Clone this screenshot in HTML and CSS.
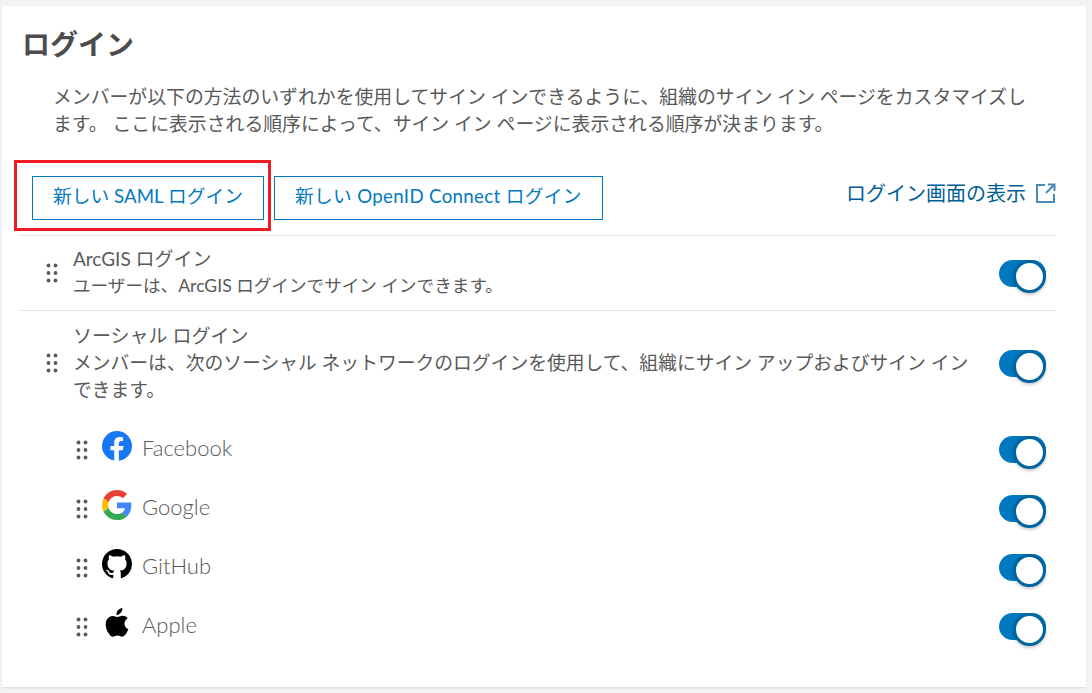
FILE: index.html
```html
<!DOCTYPE html>
<html lang="ja">
<head>
    <meta charset="UTF-8">
    <title>ログイン</title>
    <link rel="stylesheet" href="styles.css">
</head>
<body>
    <svg class="defs" width="0" height="0">
        <symbol id="grip" viewBox="0 0 12 20">
            <circle cx="2.5" cy="2.5" r="1.900"/><circle cx="9.5" cy="2.5" r="1.900"/>
            <circle cx="2.5" cy="10" r="1.900"/><circle cx="9.5" cy="10" r="1.900"/>
            <circle cx="2.5" cy="17.5" r="1.900"/><circle cx="9.5" cy="17.5" r="1.900"/>
        </symbol>
    </svg>
    <div class="card">
        <h2 class="title">ログイン</h2>
        <p class="intro">メンバーが以下の方法のいずれかを使用してサイン インできるように、組織のサイン イン ページをカスタマイズします。 ここに表示される順序によって、サイン イン ページに表示される順序が決まります。</p>
        <div class="actions">
            <a class="btn btn-saml">新しい SAML ログイン</a>
            <a class="btn btn-openid">新しい OpenID Connect ログイン</a>
            <a class="view-link">ログイン画面の表示
                <svg class="ext-icon" viewBox="0 0 20 20" fill="none" stroke="#4a8ab8" stroke-width="2">
                    <path d="M9 2H1v17h17v-8"/>
                    <path d="M12 1.500h6.500V8M18.500 1.500L10 10"/>
                </svg>
            </a>
            <div class="highlight"></div>
        </div>
        <div class="row row-arcgis">
            <svg class="grip"><use href="#grip"/></svg>
            <div class="row-text">
                <div class="row-title">ArcGIS ログイン</div>
                <div class="row-desc">ユーザーは、ArcGIS ログインでサイン インできます。</div>
            </div>
            <div class="toggle"></div>
        </div>
        <div class="row row-social">
            <svg class="grip"><use href="#grip"/></svg>
            <div class="row-text">
                <div class="row-title">ソーシャル ログイン</div>
                <div class="row-desc">メンバーは、次のソーシャル ネットワークのログインを使用して、組織にサイン アップおよびサイン インできます。</div>
            </div>
            <div class="toggle"></div>
        </div>
        <div class="providers">
            <div class="provider">
                <svg class="grip"><use href="#grip"/></svg>
                <svg class="logo" viewBox="0 0 30 30">
                    <circle cx="15" cy="15" r="15" fill="#1877f2"/>
                    <path fill="#fff" d="M20.8 19.3l.7-4.3h-4.700v-2.800c0-1.200.6-2.300 2.400-2.300h1.900V6.200s-1.700-.3-3.300-.3c-3.400 0-5.600 2.100-5.600 5.800V15H8.400v4.300h3.800v10.500c.8.1 1.500.2 2.300.2s1.600-.1 2.300-.2V19.300z"/>
                </svg>
                <span class="provider-name">Facebook</span>
                <div class="toggle"></div>
            </div>
            <div class="provider">
                <svg class="grip"><use href="#grip"/></svg>
                <svg class="logo" viewBox="0 0 48 48">
                    <path fill="#ea4335" d="M24 9.500c3.500 0 6.700 1.200 9.200 3.600l6.900-6.900C35.900 2.400 30.500 0 24 0 14.600 0 6.500 5.400 2.600 13.200l8 6.200C12.400 13.700 17.700 9.500 24 9.500z"/>
                    <path fill="#4285f4" d="M47 24.500c0-1.600-.1-3.100-.4-4.500H24v9h12.900c-.6 3-2.300 5.500-4.800 7.200l7.700 6C44.300 38 47 31.800 47 24.500z"/>
                    <path fill="#fbbc05" d="M10.600 28.600c-.5-1.400-.8-3-.8-4.600s.3-3.200.8-4.600l-8-6.200C.9 16.500 0 20.100 0 24s.9 7.500 2.600 10.800z"/>
                    <path fill="#34a853" d="M24 48c6.500 0 11.900-2.100 15.900-5.800l-7.700-6c-2.200 1.400-4.900 2.300-8.200 2.300-6.300 0-11.600-4.200-13.400-9.900l-8 6.200C6.500 42.600 14.600 48 24 48z"/>
                </svg>
                <span class="provider-name">Google</span>
                <div class="toggle"></div>
            </div>
            <div class="provider">
                <svg class="grip"><use href="#grip"/></svg>
                <svg class="logo" viewBox="0 0 16 16">
                    <path fill="#000" d="M8 0C3.580 0 0 3.580 0 8c0 3.540 2.290 6.530 5.470 7.590.4.070.55-.17.550-.38 0-.19-.01-.82-.01-1.490-2.010.37-2.530-.49-2.690-.94-.09-.23-.48-.94-.82-1.130-.28-.15-.68-.52-.01-.53.630-.01 1.080.58 1.230.82.720 1.210 1.870.87 2.330.66.070-.52.280-.87.510-1.070-1.780-.2-3.640-.89-3.640-3.950 0-.87.310-1.590.820-2.150-.08-.2-.36-1.020.08-2.120 0 0 .67-.21 2.200.82.640-.18 1.320-.27 2-.27s1.360.09 2 .27c1.530-1.040 2.200-.82 2.200-.82.440 1.100.16 1.920.08 2.120.51.560.82 1.270.82 2.150 0 3.070-1.870 3.750-3.650 3.950.29.250.54.730.54 1.480 0 1.070-.01 1.930-.01 2.200 0 .21.150.46.550.38A8.010 8.010 0 0 0 16 8c0-4.420-3.580-8-8-8z"/>
                </svg>
                <span class="provider-name">GitHub</span>
                <div class="toggle"></div>
            </div>
            <div class="provider">
                <svg class="grip"><use href="#grip"/></svg>
                <svg class="logo" viewBox="0 0 30 30">
                    <path fill="#000" d="M20.300 0c.2 1.900-.5 3.500-1.500 4.800-1.100 1.300-2.700 2.300-4.400 2.200-.2-1.800.6-3.500 1.600-4.700C17.100 1.100 18.900.1 20.300 0z"/>
                    <path fill="#000" d="M25.700 10.200c-.2.100-3.200 1.800-3.200 5.400 0 4.200 3.700 5.600 3.800 5.700 0 .1-.6 2-1.900 4-1.200 1.700-2.400 3.400-4.300 3.400s-2.400-1.100-4.600-1.100c-2.100 0-2.900 1.200-4.600 1.200s-2.900-1.600-4.300-3.600C5 23.300 3.700 19.700 3.700 16.300c0-5.500 3.600-8.400 7.100-8.400 1.900 0 3.400 1.200 4.600 1.200 1.100 0 2.900-1.300 5-1.300.8 0 3.700.1 5.300 2.400z"/>
                </svg>
                <span class="provider-name">Apple</span>
                <div class="toggle"></div>
            </div>
        </div>
    </div>
</body>
</html>
```

FILE: styles.css
```css
* {
    margin: 0;
    padding: 0;
    box-sizing: border-box;
}
html, body {
    height: 100%;
}
body {
    background-color: #f3f3f3;
    color: #595959;
    font-family: "Lato", "Noto Sans CJK JP", sans-serif;
    font-size: 18.7px;
    padding: 6px 6px 6px 2px;
    overflow: hidden;
}
.defs {
    position: absolute;
}
.card {
    background: #fff;
    height: 681px;
    padding: 20px 30px 0 16px;
    box-shadow: 0 1px 2px rgba(0, 0, 0, 0.1);
}
.title {
    font-size: 28px;
    font-weight: 700;
    line-height: 36px;
    padding-left: 4px;
    color: #4c4c4c;
}
.intro {
    margin: 21px 20px 0 35px;
    font-size: 18.85px;
    line-height: 27px;
}
.actions {
    position: relative;
    display: flex;
    align-items: flex-start;
    gap: 10px;
    margin-top: 39px;
    padding: 0 0 15px 14px;
    border-bottom: 1px solid #e9e9e9;
}
.btn {
    display: block;
    height: 44px;
    line-height: 39px;
    padding: 0 20px;
    border: 1px solid #0079c1;
    color: #0079c1;
    white-space: nowrap;
}
.btn-saml {
    letter-spacing: 0.05px;
}
.btn-openid {
    letter-spacing: 0.33px;
}
.view-link {
    margin-left: auto;
    display: flex;
    align-items: center;
    gap: 10px;
    color: #005e95;
    font-size: 20px;
    line-height: 34px;
}
.ext-icon {
    width: 20px;
    height: 20px;
}
.highlight {
    position: absolute;
    left: -4px;
    top: -16px;
    width: 257px;
    height: 71px;
    border: 3px solid #ed1c24;
}
.row {
    display: flex;
    align-items: center;
    padding: 0 10px 0 28px;
    border-bottom: 1px solid #e9e9e9;
}
.row-arcgis {
    height: 75px;
}
.row-arcgis .row-text {
    margin-top: -2px;
}
.row-social {
    height: 104px;
    border-bottom: none;
}
.row-social .row-desc {
    font-size: 18.8px;
}
.grip {
    flex: none;
    width: 12px;
    height: 20px;
    fill: #595959;
}
.row-text {
    flex: 1;
    margin: 0 30px 0 15px;
}
.row-title {
    font-size: 19px;
    line-height: 26px;
}
.row-desc {
    font-size: 17.6px;
    line-height: 27px;
}
.toggle {
    position: relative;
    flex: none;
    width: 47px;
    height: 27px;
    border-radius: 14px;
    background: #0079c1;
}
.toggle::after {
    content: "";
    position: absolute;
    right: 0;
    top: 0;
    width: 27px;
    height: 27px;
    border-radius: 50%;
    background: #fff;
    border: 3px solid #00659f;
    box-shadow: 0 2px 3px rgba(0, 0, 0, 0.2);
}
.providers {
    padding: 5px 10px 0 58px;
}
.provider {
    display: flex;
    align-items: center;
    height: 59px;
}
.logo {
    flex: none;
    width: 30px;
    height: 30px;
    margin: -8px 10px 0 14px;
}
.provider-name {
    flex: 1;
    font-size: 22px;
    font-weight: 300;
    margin-top: -4px;
}
```
